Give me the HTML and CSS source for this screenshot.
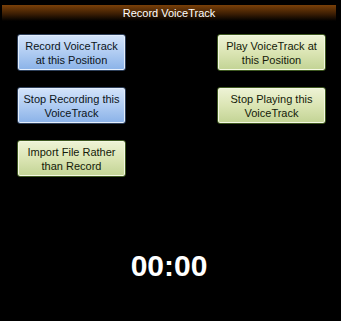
FILE: index.html
```html
<!DOCTYPE html>
<html>
<head>
<meta charset="utf-8">
<link rel="stylesheet" href="styles.css">
</head>
<body>
<div class="panel">
  <div class="titlebar">Record VoiceTrack</div>
  <div class="grid">
    <button class="btn blue">Record VoiceTrack<br>at this Position</button>
    <button class="btn green">Play VoiceTrack at<br>this Position</button>
    <button class="btn blue">Stop Recording this<br>VoiceTrack</button>
    <button class="btn green">Stop Playing this<br>VoiceTrack</button>
    <button class="btn green">Import File Rather<br>than Record</button>
  </div>
  <div class="timer">00:00</div>
</div>
</body>
</html>
```

FILE: styles.css
```css
html, body {
  margin: 0;
  padding: 0;
  background: #000;
  width: 341px;
  height: 321px;
  overflow: hidden;
}
.panel {
  padding: 5px 5px 0 2px;
  font-family: "Liberation Sans", Arial, sans-serif;
}
.titlebar {
  height: 16px;
  line-height: 16px;
  text-align: center;
  color: #fff;
  font-size: 11px;
  background: linear-gradient(to bottom, #7a4008 0%, #3c1e04 55%, #000 100%);
}
.grid {
  display: grid;
  grid-template-columns: 109px 109px;
  grid-auto-rows: 37px;
  column-gap: 91px;
  row-gap: 16px;
  padding-left: 15px;
  margin-top: 13px;
}
.btn {
  font-family: "Liberation Sans", Arial, sans-serif;
  font-size: 11px;
  line-height: 14px;
  padding: 1px 0 0;
  margin: 0;
  border-radius: 3px;
  text-align: center;
  cursor: default;
}
.blue {
  color: #0c1420;
  border: 1px solid #2e405a;
  box-shadow: inset 0 0 0 1px #e4eefc;
  background: linear-gradient(to bottom, #d4e4fa 0%, #b0ccf2 50%, #8ab2e8 100%);
}
.green {
  color: #141a08;
  border: 1px solid #3e5820;
  box-shadow: inset 0 0 0 1px #f4f8e2;
  background: linear-gradient(to bottom, #eef3d6 0%, #dbe5b4 50%, #c2d394 100%);
}
.timer {
  margin-top: 72px;
  text-align: center;
  color: #fff;
  font-weight: bold;
  font-size: 30px;
  line-height: 34px;
}
```
